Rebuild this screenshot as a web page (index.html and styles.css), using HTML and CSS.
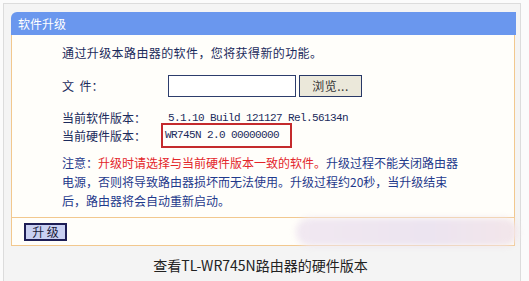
FILE: index.html
```html
<!DOCTYPE html>
<html lang="zh-CN">
<head>
  <meta charset="UTF-8">
  <title>软件升级</title>
  <link rel="stylesheet" href="styles.css">
</head>
<body>
  <div class="frame">
    <div class="panel">
      <div class="panel-head">软件升级</div>
      <div class="panel-body">
        <div class="intro">通过升级本路由器的软件，您将获得新的功能。</div>
        <div class="row file-row">
          <span class="label">文&nbsp;&nbsp;件：</span>
          <span class="file-input"></span>
          <span class="browse">浏览...</span>
        </div>
        <div class="row ver-row">
          <span class="label">当前软件版本：</span>
          <span class="mono">5.1.10 Build 121127 Rel.56134n</span>
        </div>
        <div class="row ver-row">
          <span class="label">当前硬件版本：</span>
          <span class="mono hw-box">WR745N 2.0 00000000</span>
        </div>
        <div class="notice">
          注意：<span class="warn">升级时请选择与当前硬件版本一致的软件。</span>升级过程不能关闭路由器<br>
          电源，否则将导致路由器损坏而无法使用。升级过程约20秒，当升级结束<br>
          后，路由器将会自动重新启动。
        </div>
      </div>
      <div class="panel-foot">
        <span class="upgrade-btn">升&nbsp;级</span>
      </div>
    </div>
    <div class="smudge"></div>
    <div class="caption">查看TL-WR745N路由器的硬件版本</div>
  </div>
</body>
</html>
```

FILE: styles.css
```css
html, body {
  margin: 0;
  padding: 0;
  background: #fbfbfb;
  font-family: "Noto Sans CJK SC", "Noto Sans", sans-serif;
  overflow: hidden;
}
.frame {
  position: relative;
  margin: 3px 0 0 3px;
  width: 516px;
  height: 290px;
  border: 1px solid #dcdcdc;
  background: #f4f4f4;
}
.panel {
  margin: 8px 0 0 7px;
  width: 504px;
}
.panel-head {
  height: 23px;
  line-height: 23px;
  padding-left: 7px;
  background: #6a97ee;
  border-radius: 6px 0 0 0;
  color: #fff;
  font-size: 12px;
  width: 498px;
}
.panel-body {
  background: #fffefa;
  border-left: 1px solid #f2c88e;
  border-right: 1px solid #f2c88e;
  padding: 9px 0 7px 50px;
  font-size: 12px;
  color: #1b2b5c;
}
.intro {
  line-height: 18px;
  letter-spacing: 0.4px;
}
.row {
  display: flex;
  align-items: center;
}
.label {
  width: 106px;
  flex: none;
  line-height: 18px;
}
.file-row {
  margin-top: 13px;
  height: 22px;
}
.file-input {
  width: 126px;
  height: 20px;
  background: #fff;
  border: 1px solid #2d3d6c;
}
.browse {
  margin-left: 3px;
  width: 61px;
  height: 20px;
  line-height: 20px;
  padding-left: 0;
  text-align: center;
  background: #ebe8da;
  border: 1px solid #283866;
  color: #333;
  letter-spacing: 0.5px;
}
.ver-row {
  height: 18px;
}
.ver-row:nth-of-type(3) {
  margin-top: 12px;
}
.mono {
  font-family: "Liberation Mono", "DejaVu Sans Mono", monospace;
  font-size: 11px;
  letter-spacing: -0.6px;
  line-height: 18px;
  color: #1b2b5c;
}
.hw-box {
  height: 21px;
  line-height: 21px;
  margin: -4px 0 -3px -7px;
  padding: 0 11px 0 2px;
  border: 2px solid #c42a2c;
}
.notice {
  margin-top: 8px;
  line-height: 19px;
  color: #1f3a8c;
  white-space: nowrap;
}
.warn {
  color: #e3262a;
}
.panel-foot {
  height: 27px;
  display: flex;
  align-items: center;
  padding-left: 12px;
  background: #fffefa;
  border: 1px solid #f2c88e;
}
.upgrade-btn {
  width: 39px;
  height: 14px;
  line-height: 14px;
  text-align: center;
  font-size: 12px;
  background: #c9d0f2;
  border: 2px solid #1d1d55;
  color: #1a1a3a;
}
.smudge {
  position: absolute;
  left: 292px;
  top: 214px;
  width: 222px;
  height: 28px;
  border-radius: 14px;
  background: linear-gradient(90deg, #f1e8f1, #ece4f0 60%, #f3e6ea);
  filter: blur(3px);
}
.caption {
  margin-top: 9px;
  text-align: center;
  font-size: 14px;
  line-height: 20px;
  color: #222;
  padding-right: 3px;
}
```
